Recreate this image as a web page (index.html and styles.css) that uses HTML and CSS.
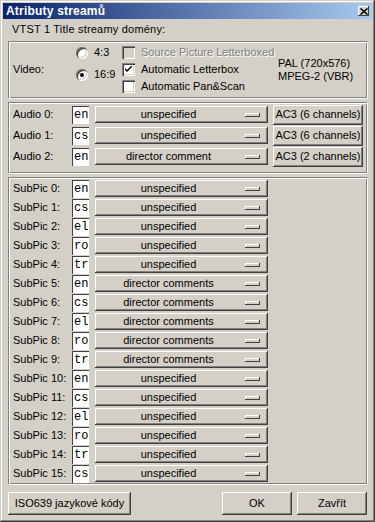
FILE: index.html
```html
<!DOCTYPE html>
<html lang="cs">
<head>
	<meta charset="UTF-8">
	<title>Atributy streamů</title>
	<link rel="stylesheet" href="styles.css">
</head>
<body>
	<div class="window">
		<div class="titlebar">
			<span class="title">Atributy streamů</span>
			<span class="close"><svg width="8" height="7" viewBox="0 0 8 7"><path d="M0.5 0.5L7.5 6.5M7.5 0.5L0.5 6.5" stroke="#000" stroke-width="1.5"/></svg></span>
		</div>

		<div class="caption">VTST 1 Title streamy domény:</div>

		<!-- video -->
		<div class="group video">
			<div class="video-label">Video:</div>
			<div class="radios">
				<div class="opt"><span class="radio"></span>4:3</div>
				<div class="opt"><span class="radio on"></span>16:9</div>
			</div>
			<div class="checks">
				<div class="opt disabled"><span class="check"></span>Source Picture Letterboxed</div>
				<div class="opt"><span class="check"><svg width="7" height="7" viewBox="0 0 7 7"><path d="M0 2L2 4L7 -1L7 1L2 6L0 4Z" fill="#000"/></svg></span>Automatic Letterbox</div>
				<div class="opt"><span class="check"></span>Automatic Pan&amp;Scan</div>
			</div>
			<div class="info">PAL (720x576)<br>MPEG-2 (VBR)</div>
		</div>

		<!-- audio -->
		<div class="group audio">
			<div class="row">
				<span class="label">Audio 0:</span>
				<span class="lang">en</span>
				<span class="combo"><span class="combo-text">unspecified</span><span class="combo-btn"></span></span>
				<span class="button fmt">AC3 (6 channels)</span>
			</div>
			<div class="row">
				<span class="label">Audio 1:</span>
				<span class="lang">cs</span>
				<span class="combo"><span class="combo-text">unspecified</span><span class="combo-btn"></span></span>
				<span class="button fmt">AC3 (6 channels)</span>
			</div>
			<div class="row">
				<span class="label">Audio 2:</span>
				<span class="lang">en</span>
				<span class="combo"><span class="combo-text">director comment</span><span class="combo-btn"></span></span>
				<span class="button fmt">AC3 (2 channels)</span>
			</div>
		</div>

		<!-- subpictures -->
		<div class="group subpic">
			<div class="row"><span class="label">SubPic 0:</span><span class="lang">en</span><span class="combo"><span class="combo-text">unspecified</span><span class="combo-btn"></span></span></div>
			<div class="row"><span class="label">SubPic 1:</span><span class="lang">cs</span><span class="combo"><span class="combo-text">unspecified</span><span class="combo-btn"></span></span></div>
			<div class="row"><span class="label">SubPic 2:</span><span class="lang">el</span><span class="combo"><span class="combo-text">unspecified</span><span class="combo-btn"></span></span></div>
			<div class="row"><span class="label">SubPic 3:</span><span class="lang">ro</span><span class="combo"><span class="combo-text">unspecified</span><span class="combo-btn"></span></span></div>
			<div class="row"><span class="label">SubPic 4:</span><span class="lang">tr</span><span class="combo"><span class="combo-text">unspecified</span><span class="combo-btn"></span></span></div>
			<div class="row"><span class="label">SubPic 5:</span><span class="lang">en</span><span class="combo"><span class="combo-text">director comments</span><span class="combo-btn"></span></span></div>
			<div class="row"><span class="label">SubPic 6:</span><span class="lang">cs</span><span class="combo"><span class="combo-text">director comments</span><span class="combo-btn"></span></span></div>
			<div class="row"><span class="label">SubPic 7:</span><span class="lang">el</span><span class="combo"><span class="combo-text">director comments</span><span class="combo-btn"></span></span></div>
			<div class="row"><span class="label">SubPic 8:</span><span class="lang">ro</span><span class="combo"><span class="combo-text">director comments</span><span class="combo-btn"></span></span></div>
			<div class="row"><span class="label">SubPic 9:</span><span class="lang">tr</span><span class="combo"><span class="combo-text">director comments</span><span class="combo-btn"></span></span></div>
			<div class="row"><span class="label">SubPic 10:</span><span class="lang">en</span><span class="combo"><span class="combo-text">unspecified</span><span class="combo-btn"></span></span></div>
			<div class="row"><span class="label">SubPic 11:</span><span class="lang">cs</span><span class="combo"><span class="combo-text">unspecified</span><span class="combo-btn"></span></span></div>
			<div class="row"><span class="label">SubPic 12:</span><span class="lang">el</span><span class="combo"><span class="combo-text">unspecified</span><span class="combo-btn"></span></span></div>
			<div class="row"><span class="label">SubPic 13:</span><span class="lang">ro</span><span class="combo"><span class="combo-text">unspecified</span><span class="combo-btn"></span></span></div>
			<div class="row"><span class="label">SubPic 14:</span><span class="lang">tr</span><span class="combo"><span class="combo-text">unspecified</span><span class="combo-btn"></span></span></div>
			<div class="row"><span class="label">SubPic 15:</span><span class="lang">cs</span><span class="combo"><span class="combo-text">unspecified</span><span class="combo-btn"></span></span></div>
		</div>

		<div class="footer">
			<span class="button iso">ISO639 jazykové kódy</span>
			<span class="spacer"></span>
			<span class="button dlg">OK</span>
			<span class="button dlg">Zavřít</span>
		</div>
	</div>
</body>
</html>
```

FILE: styles.css
```css
*{padding: 0;margin: 0;box-sizing: border-box;}
body{background: #d4d0c8;font: 11px/13px "Liberation Sans", Arial, sans-serif;color: #000;}

.window{
	width: 375px;
	height: 522px;
	padding: 3px;
	background: #d4d0c8;
	box-shadow: inset -1px -1px #404040, inset 1px 1px #d4d0c8, inset -2px -2px #808080, inset 2px 2px #fff;
	display: flex;
	flex-direction: column;
}

/* title bar */
.titlebar{
	height: 16px;
	padding: 0 3px 0 3px;
	background: linear-gradient(to right, #0a246a, #a6caf0);
	display: flex;
	align-items: center;
	justify-content: space-between;
}
.title{color: #fff;font-weight: bold;font-size: 12px;letter-spacing: 0.2px;}
.close{
	width: 11px;
	height: 10px;
	background: #d4d0c8;
	box-shadow: inset -1px -1px #404040, inset 1px 1px #fff;
	display: flex;
	align-items: center;
	justify-content: center;
}

.caption{margin: 4px 0 0 9px;height: 18px;letter-spacing: 0.2px;}

/* etched frames */
.group{
	margin: 0 4px 0 5px;
	border: 1px solid #808080;
	border-right-color: #fff;
	border-bottom-color: #fff;
	box-shadow: inset 1px 1px #fff, inset -1px -1px #808080;
	padding: 1px 1px;
}

/* video frame */
.video{display: flex;align-items: stretch;padding: 2px 2px 3px 4px;}
.video-label{width: 63px;align-self: center;}
.radios{width: 46px;display: flex;flex-direction: column;gap: 5px;}
.checks{width: 156px;display: flex;flex-direction: column;}
.info{align-self: center;}
.opt{height: 17px;display: flex;align-items: center;gap: 6px;white-space: nowrap;}
.opt.disabled{color: #808080;text-shadow: 1px 1px #fff;}
.radio{
	width: 12px;
	height: 12px;
	border-radius: 50%;
	background: #fff;
	box-shadow: inset 1px 1px #808080, inset 2px 2px #404040, inset -1px -1px #fff, inset -2px -2px #d4d0c8;
	display: flex;
	align-items: center;
	justify-content: center;
	flex: none;
}
.radio.on:after{content: "";width: 4px;height: 4px;border-radius: 50%;background: #000;}
.check{
	width: 13px;
	height: 13px;
	background: #fff;
	box-shadow: inset 1px 1px #808080, inset 2px 2px #404040, inset -1px -1px #fff, inset -2px -2px #d4d0c8;
	display: flex;
	align-items: center;
	justify-content: center;
	flex: none;
}
.disabled .check{background: #d4d0c8;}

/* rows */
.audio{margin-top: 3px;padding: 1px 1px 6px 4px;}
.audio .row{height: 21px;}
.subpic{margin-top: 3px;padding: 1px 1px 1px 4px;}
.subpic .row{height: 19px;}
.row{display: flex;align-items: center;}
.label{width: 59px;white-space: nowrap;}
.lang{
	width: 17px;
	height: 18px;
	background: #fff;
	box-shadow: inset 1px 1px #404040, inset -1px -1px #fff;
	font: 12px/18px "Liberation Mono", "Courier New", monospace;
	padding-left: 2px;
}
.combo{
	width: 173px;
	height: 17px;
	margin-left: 6px;
	background: #d4d0c8;
	box-shadow: inset -1px -1px #404040, inset 1px 1px #fff, inset -2px -2px #808080;
	display: flex;
	align-items: center;
}
.combo-text{flex: 1;text-align: center;}
.combo-btn{
	width: 15px;
	height: 4px;
	margin: 0 8px 0 3px;
	box-shadow: inset -1px -1px #404040, inset 1px 1px #fff;
}

/* buttons */
.button{
	display: flex;
	align-items: center;
	justify-content: center;
	background: #d4d0c8;
	box-shadow: inset -1px -1px #404040, inset 1px 1px #fff, inset -2px -2px #808080;
	white-space: nowrap;
}
.fmt{width: 90px;height: 20px;margin-left: 5px;}

.footer{display: flex;gap: 5px;margin: 7px 5px 0 5px;}
.spacer{flex: 1;}
.iso{width: 123px;height: 23px;}
.dlg{width: 70px;height: 23px;}
```
